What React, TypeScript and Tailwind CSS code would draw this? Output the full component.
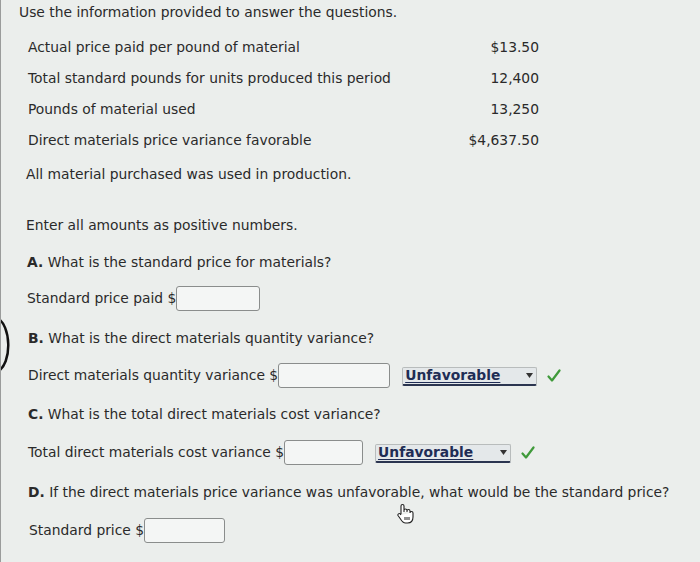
import React from 'react';

function Field({ w }: { w: string }) {
  return <span className={`inline-block h-[25px] ${w} border border-[#8a8d8c] rounded-[3px] bg-[#f4f6f5] align-middle`} />;
}

function Choice({ w }: { w: string }) {
  return (
    <span className={`inline-flex items-center justify-between h-[19px] ${w} border border-[#b8bcbc] border-b-2 border-b-[#2b3550] rounded-[2px] bg-[#e4e8ea] pl-[2px] pr-[3px] align-middle`}>
      <span className="font-bold text-[#1f2d55] underline decoration-1 underline-offset-2">Unfavorable</span>
      <svg width="7" height="5" viewBox="0 0 7 5"><path d="M0 0h7L3.5 5z" fill="#333" /></svg>
    </span>
  );
}

function Check() {
  return (
    <svg width="14" height="14" viewBox="0 0 14 14" className="ml-[10px]">
      <path d="M1.5 7.5l3.5 4L12.5 1.5" fill="none" stroke="#3f9a3a" strokeWidth="2.2" strokeLinecap="round" strokeLinejoin="round" />
    </svg>
  );
}

const data = [
  ['Actual price paid per pound of material', '$13.50'],
  ['Total standard pounds for units produced this period', '12,400'],
  ['Pounds of material used', '13,250'],
  ['Direct materials price variance favorable', '$4,637.50'],
];

export default function App() {
  return (
    <div className="relative w-[700px] h-[562px] overflow-hidden bg-[#ebeeec] text-[#2a2a2a] text-[13.85px] border-l border-[#9a9c9b] font-['DejaVu_Sans','Liberation_Sans',sans-serif]">
      <svg width="14" height="60" viewBox="0 0 14 60" className="absolute left-0 top-[316px]">
        <path d="M-4 2 C10 8 12 48 -4 56" fill="none" stroke="#111" strokeWidth="2.5" />
      </svg>
      <div className="pl-[18px] pt-[3px]">
        <p className="h-[18px] leading-[18px]">Use the information provided to answer the questions.</p>
        <div className="mt-[17px] pl-[9px] w-[520px] flex flex-col gap-[13px]">
          {data.map(([label, value]) => (
            <div key={label} className="flex justify-between h-[18px] leading-[18px]">
              <span>{label}</span>
              <span>{value}</span>
            </div>
          ))}
        </div>
        <p className="mt-[16px] pl-[7px] h-[18px] leading-[18px]">All material purchased was used in production.</p>
        <p className="mt-[33px] pl-[7px] h-[18px] leading-[18px]">Enter all amounts as positive numbers.</p>
        <p className="mt-[19px] pl-[8px] h-[18px] leading-[18px]"><b>A.</b> What is the standard price for materials?</p>
        <div className="mt-[15px] pl-[8px] flex items-center h-[25px]">
          <span>Standard price paid $</span>
          <Field w="w-[84px]" />
        </div>
        <p className="mt-[18px] pl-[9px] h-[18px] leading-[18px]"><b>B.</b> What is the direct materials quantity variance?</p>
        <div className="mt-[16px] pl-[9px] flex items-center h-[25px]">
          <span>Direct materials quantity variance $</span>
          <Field w="w-[112px]" />
          <span className="ml-[12px]"><Choice w="w-[135px]" /></span>
          <Check />
        </div>
        <p className="mt-[17px] pl-[9px] h-[18px] leading-[18px]"><b>C.</b> What is the total direct materials cost variance?</p>
        <div className="mt-[17px] pl-[9px] flex items-center h-[25px]">
          <span>Total direct materials cost variance $</span>
          <Field w="w-[79px]" />
          <span className="ml-[12px]"><Choice w="w-[136px]" /></span>
          <Check />
        </div>
        <p className="mt-[18px] pl-[9px] h-[18px] leading-[18px]"><b>D.</b> If the direct materials price variance was unfavorable, what would be the standard price?</p>
        <div className="mt-[17px] pl-[10px] flex items-center h-[25px]">
          <span>Standard price $</span>
          <Field w="w-[81px]" />
        </div>
      </div>
      <svg width="20" height="22" viewBox="0 0 20 22" className="absolute left-[394px] top-[503px]">
        <path d="M6 11V3a1.5 1.5 0 013 0v6 M9 9V7.5a1.5 1.5 0 013 0V9 M12 9V8a1.5 1.5 0 013 0v1.5 M15 10a1.5 1.5 0 013 0v4c0 4-2.5 6-5.5 6h-2c-2.5 0-3.5-1.5-5-4L3 12.5a1.4 1.4 0 012.2-1.6L6 12" fill="#fff" stroke="#222" strokeWidth="1.1" strokeLinejoin="round" />
        <path d="M10 14v3 M12 14v3 M14 14v3" stroke="#222" strokeWidth="1" />
      </svg>
    </div>
  );
}
